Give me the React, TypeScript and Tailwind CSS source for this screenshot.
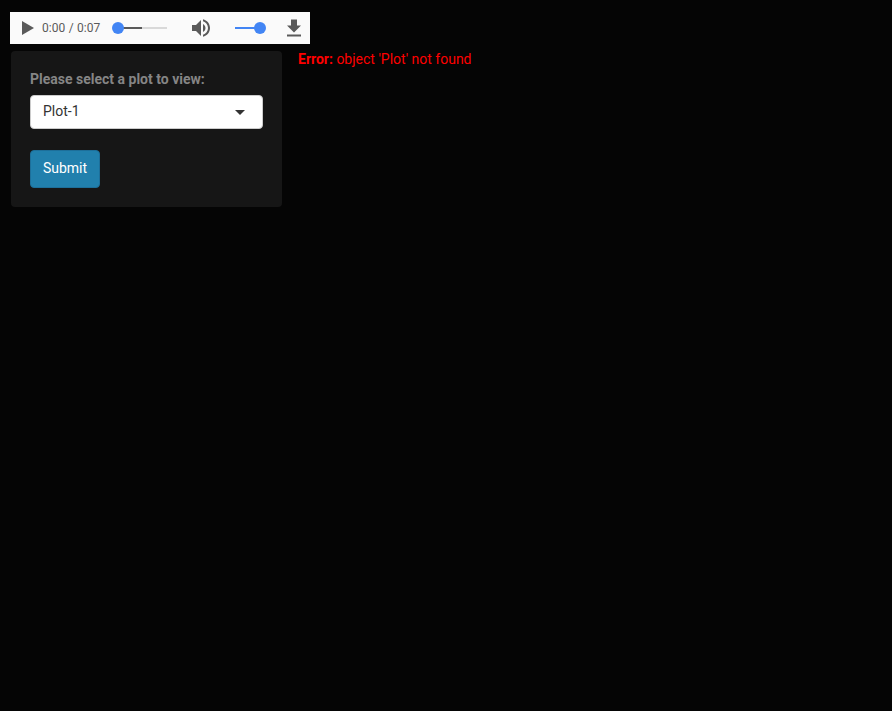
export default function App() {
  return (
    <div className="min-h-[711px] bg-[#050505] font-['Roboto',sans-serif] text-[14px]">
      <div className="pl-[10px] pt-[12px]">
        {/* audio player */}
        <div className="flex h-[32px] w-[300px] items-center bg-[#fafafa] text-[#5f6368]">
          <svg width="12" height="14" viewBox="0 0 12 14" className="ml-[12px]">
            <path d="M0 0 L12 7 L0 14 Z" fill="#5a5a5a" />
          </svg>
          <span className="ml-[8px] w-[58px] whitespace-nowrap text-[12px] leading-none text-[#5a5a5a]">
            0:00 <span className="mx-[0.5px]">/</span> 0:07
          </span>
          <div className="relative ml-[13px] h-[2px] w-[54px] bg-[#d9d9d9]">
            <div className="h-full w-[29px] bg-[#5a5a5a]" />
            <div className="absolute left-[-1px] top-[-5px] h-[12px] w-[12px] rounded-full bg-[#4285f4]" />
          </div>
          <svg width="24" height="24" viewBox="0 0 24 24" className="ml-[22px]">
            <path
              d="M3 9v6h4l5 5V4L7 9H3zm13.5 3c0-1.77-1.02-3.29-2.5-4.03v8.05c1.48-.73 2.5-2.25 2.5-4.02zM14 3.23v2.06c2.89.86 5 3.54 5 6.71s-2.11 5.85-5 6.71v2.06c4.01-.91 7-4.49 7-8.77s-2.99-7.86-7-8.77z"
              fill="#5a5a5a"
            />
          </svg>
          <div className="relative ml-[22px] h-[2px] w-[25px] bg-[#4285f4]">
            <div className="absolute right-[-6px] top-[-5px] h-[12px] w-[12px] rounded-full bg-[#4285f4]" />
          </div>
          <svg width="24" height="24" viewBox="0 0 24 24" className="ml-[22px]">
            <path d="M19 9.5h-4v-6H9v6H5l7 7 7-7zM5 18.5v2h14v-2H5z" fill="#5a5a5a" />
          </svg>
        </div>

        <div className="flex items-start">
          {/* sidebar panel */}
          <div className="ml-[1px] mt-[7px] h-[156px] w-[271px] rounded-[4px] bg-[#161616] px-[19px] pt-[18px]">
            <label className="block text-[14px] font-bold leading-[20px] text-[#858585]">
              Please select a plot to view:
            </label>
            <div className="mt-[6px] flex h-[34px] w-[233px] items-center justify-between rounded-[4px] border border-[#cccccc] bg-white pl-[12px] pr-[17px] text-[14px] text-[#333333]">
              <span className="pb-[2px]">Plot-1</span>
              <div className="h-0 w-0 border-x-[5px] border-t-[5px] border-x-transparent border-t-[#333333]" />
            </div>
            <button className="mt-[21px] h-[38px] w-[70px] rounded-[4px] border border-[#1d6f9a] bg-[#2180ad] pb-[2px] text-[14px] text-white">
              Submit
            </button>
          </div>

          {/* error message */}
          <div className="ml-[16px] mt-[7px] whitespace-nowrap text-[14px] leading-[16px] text-[#ff0000]">
            <b>Error:</b> object 'Plot' not found
          </div>
        </div>
      </div>
    </div>
  );
}
